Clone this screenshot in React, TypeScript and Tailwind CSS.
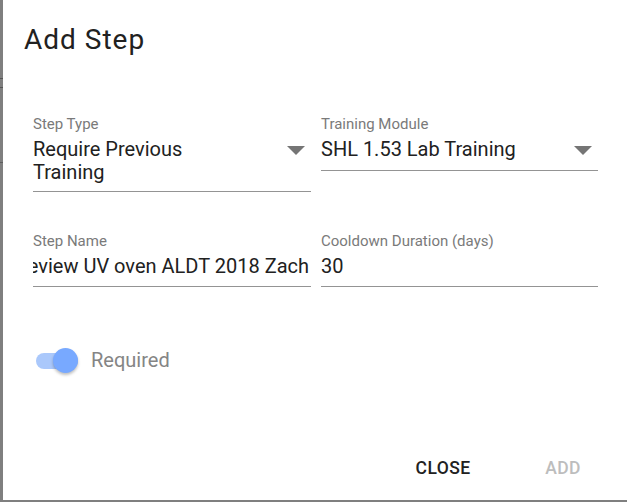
import React from 'react';

const DropArrow: React.FC = () => (
  <svg viewBox="0 0 18 9" className="w-[18px] h-[9px] mt-[8px] mr-[6px] shrink-0">
    <path d="M0 0h18L9 9z" fill="#757575" />
  </svg>
);

interface FieldProps {
  label: string;
  children: React.ReactNode;
  padBottom: string;
}

const Field: React.FC<FieldProps> = ({ label, children, padBottom }) => (
  <div className="flex flex-col">
    <div className="text-[15px] leading-[18px] text-[#7a7a7a]">{label}</div>
    <div className={`mt-[5px] flex items-start border-b border-[#949494] ${padBottom}`}>{children}</div>
  </div>
);

const App: React.FC = () => {
  return (
    <div
      className="w-[627px] h-[502px] flex flex-col bg-[#7f7f7f] overflow-hidden"
      style={{ fontFamily: 'Roboto, "Liberation Sans", sans-serif' }}
    >
      <div className="flex h-[500px]">
        {/* backdrop sliver */}
        <div className="w-[3px] flex flex-col">
          <div className="h-[78px]" />
          <div className="h-[1px] bg-[#555]" />
          <div className="h-[8px]" />
          <div className="h-[1px] bg-[#555]" />
          <div className="h-[74px]" />
          <div className="h-[1px] bg-[#5e5e5e]" />
        </div>

        <div className="w-[624px] h-[500px] bg-white flex flex-col">
          <h2 className="pl-[21px] pt-[24px] text-[28px] leading-[32px] tracking-[1px] font-normal text-[#212121]">
            Add Step
          </h2>

          <div className="pl-[30px] mt-[59px] flex flex-col">
            <div className="grid grid-cols-[278px_277px] gap-x-[10px] items-start">
              <Field label="Step Type" padBottom="pb-[7px]">
                <div className="flex-1 text-[20px] leading-[23px] text-[#212121]">
                  Require Previous
                  <br />
                  Training
                </div>
                <DropArrow />
              </Field>
              <Field label="Training Module" padBottom="pb-[9px]">
                <div className="flex-1 text-[20px] leading-[23px] text-[#212121]">SHL 1.53 Lab Training</div>
                <DropArrow />
              </Field>
            </div>

            <div className="grid grid-cols-[278px_277px] gap-x-[10px] items-start mt-[40px]">
              <Field label="Step Name" padBottom="pb-[8px]">
                <div className="flex-1 flex justify-end overflow-hidden pr-[2px] text-[20px] leading-[23px] text-[#212121] whitespace-nowrap">
                  <span>Review UV oven ALDT 2018 Zach</span>
                </div>
              </Field>
              <Field label="Cooldown Duration (days)" padBottom="pb-[8px]">
                <div className="flex-1 text-[20px] leading-[23px] text-[#212121]">30</div>
              </Field>
            </div>

            <div className="mt-[61px] pl-[3px] flex items-center">
              <div className="relative w-[42px] h-[25px]">
                <div className="absolute left-0 top-[4.5px] w-[42px] h-[16px] rounded-full bg-[#aac8fb]" />
                <div className="absolute right-0 top-0 w-[25px] h-[25px] rounded-full bg-[#78a9ff] shadow-[0_2px_3px_rgba(0,0,0,0.25)]" />
              </div>
              <span className="ml-[13px] text-[20px] leading-[23px] text-[#858585]">Required</span>
            </div>
          </div>

          <div className="mt-auto pb-[9px] pr-[24px] flex justify-end gap-[40px]">
            <button className="w-[80px] h-[45px] flex items-center justify-center text-[17.5px] font-medium tracking-[0.4px] text-[#212121] uppercase">
              Close
            </button>
            <button className="w-[80px] h-[45px] flex items-center justify-center text-[17.5px] font-medium tracking-[0.4px] text-[#bdbdbd] uppercase">
              Add
            </button>
          </div>
        </div>
      </div>
    </div>
  );
};

export default App;
